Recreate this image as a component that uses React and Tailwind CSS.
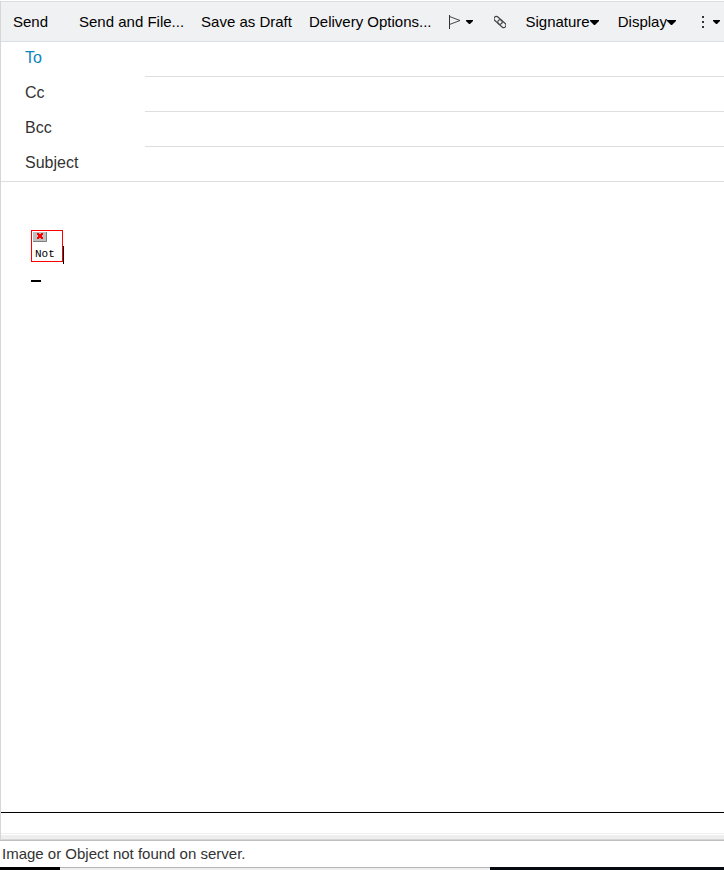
const Caret = () => (
  <svg width="9" height="5" viewBox="0 0 9 5" className="shrink-0" aria-hidden="true">
    <path d="M0 0h9v1L5 5H4L0 1z" fill="#000" />
  </svg>
)

const SmallCaret = () => (
  <svg width="7" height="4" viewBox="0 0 7 4" className="shrink-0" aria-hidden="true">
    <path d="M0 0h7v1L4 4H3L0 1z" fill="#000" />
  </svg>
)

const FlagIcon = () => (
  <svg width="12" height="14" viewBox="0 0 12 14" fill="none" stroke="#333" aria-hidden="true">
    <path d="M.5 0v14" />
    <path d="M.5 1.5L11 5.5L.5 9.5" strokeWidth=".9" />
  </svg>
)

const LinkIcon = () => (
  <svg width="12" height="14" viewBox="0 0 12 14" fill="none" stroke="#444" strokeWidth="1.2" aria-hidden="true">
    <g transform="rotate(42 6 7)">
      <rect x="-1.2" y="4.7" width="9.4" height="4.6" rx="2.3" />
      <rect x="3.8" y="4.7" width="9.4" height="4.6" rx="2.3" />
    </g>
  </svg>
)

const DotsIcon = () => (
  <svg width="4" height="14" viewBox="0 0 4 14" fill="#333" aria-hidden="true">
    <path d="M1 1h2v2H1zM1 6h2v2H1zM1 11h2v2H1z" />
  </svg>
)

const BrokenImage = () => (
  <svg width="14" height="10" viewBox="0 0 14 10" aria-hidden="true">
    <path d="M0 0h14v10H0z" fill="#c0c0c0" />
    <path d="M0 9.5h13.5V0" fill="none" stroke="#808080" />
    <path d="M4 1h2v1h2V1h2v2H9v2h1v2H8V6H6v1H4V5h1V3H4z" fill="#f00" />
  </svg>
)

const fields = [
  { id: 'to', label: 'To' },
  { id: 'cc', label: 'Cc' },
  { id: 'bcc', label: 'Bcc' },
  { id: 'subject', label: 'Subject' },
]

const Toolbar = () => (
  <div className="h-[41px] pl-3 bg-[#f0f1f3] border-y border-[#dcdfe2] flex items-center gap-[17px] overflow-hidden whitespace-nowrap text-[15px] text-black">
    <button type="button" className="w-[49px] shrink-0 pt-0.5 text-left">Send</button>
    <button type="button" className="pt-0.5">Send and File...</button>
    <button type="button" className="pt-0.5">Save as Draft</button>
    <button type="button" className="pt-0.5">Delivery Options...</button>
    <button type="button" aria-label="Follow up" className="w-7 shrink-0 flex items-center gap-[5px]">
      <FlagIcon />
      <SmallCaret />
    </button>
    <button type="button" aria-label="Attach" className="w-[15px] shrink-0">
      <LinkIcon />
    </button>
    <div className="flex items-center gap-[19px]">
      <button type="button" className="pt-0.5 flex items-center">
        Signature
        <Caret />
      </button>
      <button type="button" className="pt-0.5 flex items-center">
        Display
        <Caret />
      </button>
      <button type="button" aria-label="More" className="ml-1.5 shrink-0 flex items-center gap-2">
        <DotsIcon />
        <SmallCaret />
      </button>
    </div>
  </div>
)

const Field = ({ id, label }) => (
  <div className="h-[35px] flex group">
    <label
      htmlFor={id}
      className="w-36 pl-6 shrink-0 leading-8 text-base text-[#333] group-first:text-[#0a84bd] group-last:border-b group-last:border-[#dedede]"
    >
      {label}
    </label>
    <input id={id} type="text" className="flex-1 min-w-0 px-1 border-b border-[#dedede] outline-none" />
  </div>
)

const App = () => {
  return (
    <div className="min-h-screen flex flex-col bg-white pt-px font-['Liberation_Sans',Arial,sans-serif]">
      <main className="flex-1 flex flex-col border-l border-[#d6d6d6]">
        <Toolbar />

        <form>
          {fields.map((field) => (
            <Field key={field.id} {...field} />
          ))}
        </form>

        {/* Message body */}
        <div className="flex-1 px-[30px] pt-12">
          <div className="flex">
            <div className="w-8 h-8 p-px border border-[#f00]">
              <BrokenImage />
              <div className="pl-0.5 pt-1.5 font-['Liberation_Mono',monospace] text-[11px] leading-3 text-black">Not</div>
            </div>
            <div className="mt-4 w-px h-[18px] bg-black"></div>
          </div>
          <div className="mt-4 w-2.5 h-0.5 bg-black"></div>
        </div>

        {/* Pane divider */}
        <div className="h-[22px] border-t border-black border-b border-b-[#eee]"></div>
        <div className="mt-px h-[5px] bg-[#eee] border-b border-[#d6d6d6]"></div>
      </main>

      <footer className="border-t border-[#c0c0c0]">
        <p className="px-0.5 text-[15px] leading-[26px] text-[#333]">Image or Object not found on server.</p>
        <div className="h-[3px] flex">
          <div className="w-[60px] bg-black"></div>
          <div className="w-[430px] bg-[#eee] border-t border-[#b5b5b5]"></div>
          <div className="flex-1 bg-[#050a10]"></div>
        </div>
      </footer>
    </div>
  )
}

export default App
